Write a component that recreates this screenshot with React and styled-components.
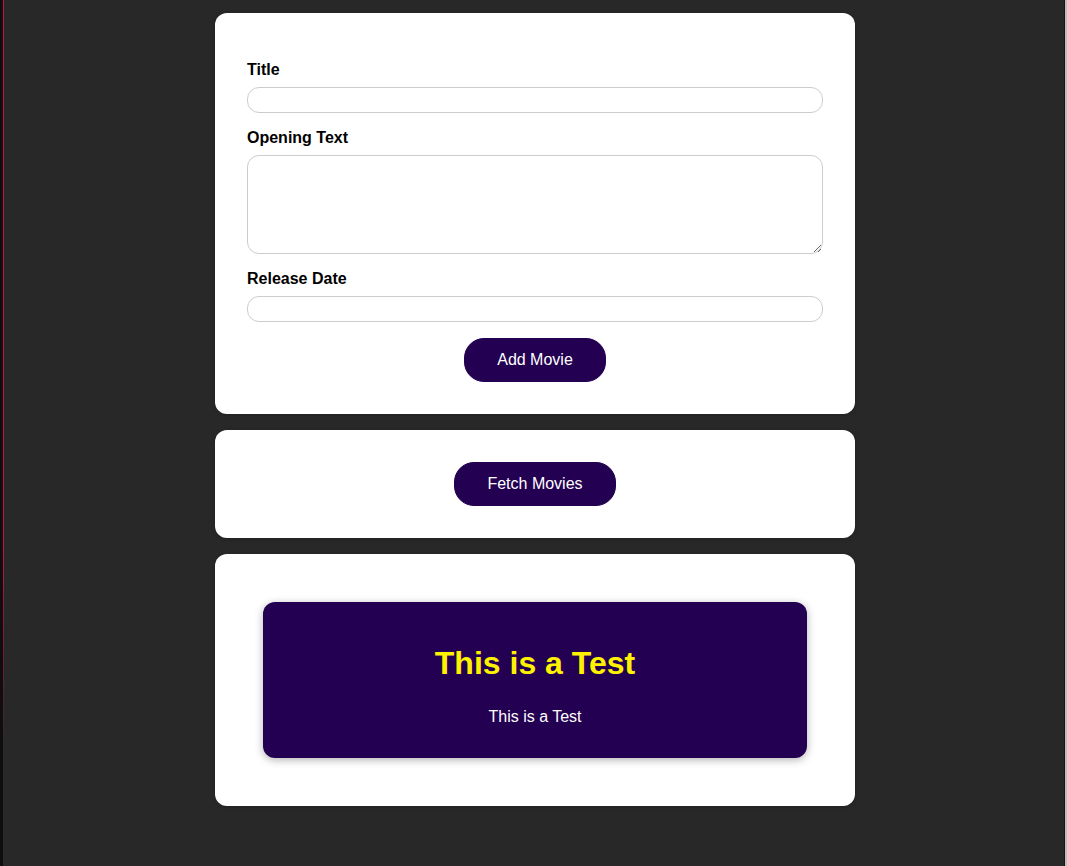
import React from 'react'
import styled, {createGlobalStyle} from 'styled-components'

const GlobalStyle = createGlobalStyle`
  * { box-sizing: border-box; }
  body {
    margin: 0;
    font-family: "Liberation Sans", Arial, sans-serif;
    background: #282828;
  }
`

const Page = styled.div`
  min-height: 100vh;
  padding: 13px 0 60px;
  border-left: 3px solid #0e0e10;
  background:
    linear-gradient(to bottom, #c8123c 0, #c8123c 62%, #282828 85%) no-repeat 0 0 / 1px 100%,
    linear-gradient(to right, #161616 0, #161616 1px, #bdbdbd 1px, #bdbdbd 3px) no-repeat right 0 top 0 / 3px 100%,
    #282828;
`

const Section = styled.section`
  width: 640px;
  margin: 0 auto 16px;
  padding: 32px;
  border-radius: 12px;
  background: #fff;
  box-shadow: 0 1px 4px rgba(0, 0, 0, 0.2);
  text-align: ${props => (props.center ? 'center' : 'left')};
`

const Form = styled.form`
  display: block;
`

const Control = styled.div`
  margin: 16px 0;
`

const Label = styled.label`
  display: block;
  font-weight: bold;
  font-size: 16px;
  color: #000;
  margin-bottom: 8px;
`

const Input = styled.input`
  display: block;
  width: 100%;
  height: 26px;
  font: inherit;
  padding: 3px;
  border-radius: 12px;
  border: 1px solid #ccc;
  outline: none;
`

const TextArea = styled.textarea`
  display: block;
  width: 100%;
  height: 99px;
  font: inherit;
  padding: 3px;
  border-radius: 12px;
  border: 1px solid #ccc;
  outline: none;
`

const Actions = styled.div`
  text-align: center;
`

const Button = styled.button`
  font: inherit;
  font-size: 16px;
  cursor: pointer;
  background: #230052;
  border: 1px solid #230052;
  color: #fff;
  height: 44px;
  padding: 0 32px;
  border-radius: 20px;
`

const Movie = styled.li`
  list-style: none;
  margin: 16px;
  padding: 16px;
  text-align: center;
  background: #230052;
  color: #fff;
  border-radius: 12px;
  box-shadow: 0 2px 8px rgba(0, 0, 0, 0.3);

  h2 {
    font-size: 32px;
    color: #fff200;
    margin: 26.5px 0;
  }

  p {
    font-size: 16px;
    margin: 16px 0;
  }
`

const MovieList = styled.ul`
  margin: 0;
  padding: 0;
`

export default function App() {
  return (
    <>
      <GlobalStyle />
      <Page>
        <Section>
          <Form onSubmit={e => e.preventDefault()}>
            <Control>
              <Label htmlFor="title">Title</Label>
              <Input type="text" id="title" />
            </Control>
            <Control>
              <Label htmlFor="opening-text">Opening Text</Label>
              <TextArea rows="5" id="opening-text" />
            </Control>
            <Control>
              <Label htmlFor="date">Release Date</Label>
              <Input type="text" id="date" />
            </Control>
            <Actions>
              <Button>Add Movie</Button>
            </Actions>
          </Form>
        </Section>
        <Section center>
          <Button>Fetch Movies</Button>
        </Section>
        <Section>
          <MovieList>
            <Movie>
              <h2>This is a Test</h2>
              <p>This is a Test</p>
            </Movie>
          </MovieList>
        </Section>
      </Page>
    </>
  )
}
